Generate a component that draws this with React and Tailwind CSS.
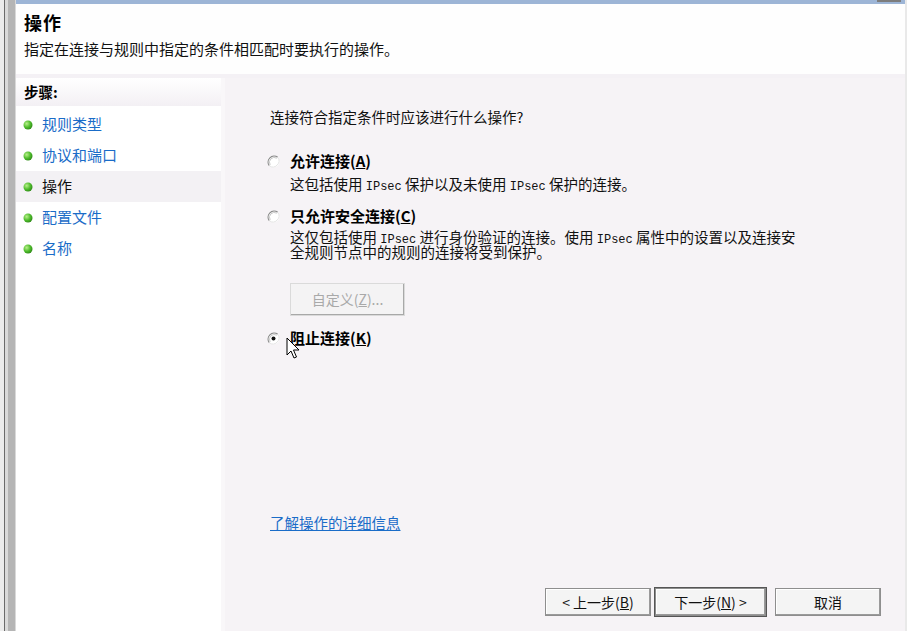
import React from 'react'

const FONT = { fontFamily: '"Noto Sans CJK SC", "Noto Sans", sans-serif' }

function Radio({ checked }) {
  return (
    <svg width="13" height="13" viewBox="0 0 13 13" className="shrink-0">
      <circle cx="6.5" cy="6.5" r="6" fill="#ffffff" />
      <path d="M2.3 10.7 A6 6 0 0 1 10.7 2.3" fill="none" stroke="#8a8a8a" strokeWidth="1.2" />
      <path d="M3.2 9.8 A4.8 4.8 0 0 1 9.8 3.2" fill="none" stroke="#c8c8c8" strokeWidth="1" />
      <path d="M10.7 2.3 A6 6 0 0 1 2.3 10.7" fill="none" stroke="#e4e4e4" strokeWidth="1" />
      {checked && <circle cx="6.5" cy="6.5" r="2" fill="#111" />}
    </svg>
  )
}

function Bullet() {
  return (
    <svg width="10" height="10" viewBox="0 0 10 10" className="shrink-0">
      <defs>
        <radialGradient id="g" cx="35%" cy="35%" r="70%">
          <stop offset="0%" stopColor="#b8f08a" />
          <stop offset="60%" stopColor="#4dbb2a" />
          <stop offset="100%" stopColor="#2f8a18" />
        </radialGradient>
      </defs>
      <circle cx="5" cy="5" r="4.5" fill="url(#g)" />
    </svg>
  )
}

const STEPS = ['规则类型', '协议和端口', '操作', '配置文件', '名称']

function Btn({ children, w, focused }) {
  return (
    <button
      className={`h-[28px] ${w} text-[14px] text-[#111] bg-[#f4f4f4] border border-[#8e8e8e] shadow-[inset_-1px_-1px_0_#9a9a9a,inset_1px_1px_0_#ffffff] flex items-center justify-center ${focused ? 'outline outline-1 outline-[#555]' : ''}`}
    >
      {children}
    </button>
  )
}

const Mono = ({ children }) => <span className="font-['Liberation_Mono'] text-[12px] leading-[10px]">{children}</span>

export default function App() {
  return (
    <div className="w-[907px] h-[631px] flex bg-[#f6f3f6] overflow-hidden relative" style={FONT}>
      {/* left frame strip */}
      <div className="w-[16px] h-full flex shrink-0">
        <div className="w-[4px] bg-[#ececec]" />
        <div className="w-[1px] bg-[#6b6b6b]" />
        <div className="w-[3px] bg-[#dadada]" />
        <div className="w-[7px] bg-[#b5b5b5]" />
        <div className="w-[1px] bg-[#d9d9d9]" />
      </div>

      <div className="flex-1 flex flex-col min-w-0">
        {/* title bar edge */}
        <div className="h-[4px] bg-[#9db5d6] flex justify-end pr-[4px] shrink-0">
          <div className="w-[24px] h-[2px] bg-[#7d7d7d]" />
        </div>

        {/* header */}
        <div className="h-[70px] bg-[#fefefe] pl-[8px] pt-[7px] shrink-0">
          <div className="text-[18px] font-bold text-black leading-[22px] tracking-[1px]">操作</div>
          <div className="text-[15px] text-[#111] leading-[20px] mt-[6px]">指定在连接与规则中指定的条件相匹配时要执行的操作。</div>
        </div>
        <div className="h-[4px] bg-[#f4f1f5] shrink-0" />

        {/* body */}
        <div className="flex-1 flex min-h-0">
          {/* steps */}
          <div className="w-[205px] bg-white flex flex-col shrink-0">
            <div className="h-[28px] bg-gradient-to-b from-white to-[#f3f0f4] flex items-center pl-[8px] text-[14.5px] font-bold text-black">
              步骤:
            </div>
            <div className="mt-[3px] flex flex-col">
              {STEPS.map((s, i) => (
                <div
                  key={s}
                  className={`h-[31px] flex items-center pl-[7px] gap-[9px] text-[15px] ${i === 2 ? 'bg-[#f3f1f4] text-[#111]' : 'text-[#1a6cc8]'}`}
                >
                  <Bullet />
                  <span>{s}</span>
                </div>
              ))}
            </div>
          </div>
          <div className="w-[4px] bg-[#f9f7f9] shrink-0" />

          {/* options */}
          <div className="flex-1 flex flex-col pl-[45px] pr-[24px] pt-[30px]">
            <div className="text-[14.5px] leading-[18px] text-[#111]">连接符合指定条件时应该进行什么操作?</div>

            <div className="mt-[25px] h-[20px] flex items-center gap-[10px] -ml-[3px]">
              <Radio />
              <span className="text-[15px] font-bold text-black">允许连接(<span className="underline">A</span>)</span>
            </div>
            <div className="mt-[4px] ml-[20px] text-[14.5px] leading-[18px] text-[#111]">
              这包括使用 <Mono>IPsec</Mono> 保护以及未使用 <Mono>IPsec</Mono> 保护的连接。
            </div>

            <div className="mt-[13px] h-[20px] flex items-center gap-[10px] -ml-[3px]">
              <Radio />
              <span className="text-[15px] font-bold text-black">只允许安全连接(<span className="underline">C</span>)</span>
            </div>
            <div className="mt-[4px] ml-[20px] h-[28px] text-[14.5px] leading-[14px] text-[#111] whitespace-nowrap">
              这仅包括使用 <Mono>IPsec</Mono> 进行身份验证的连接。使用 <Mono>IPsec</Mono> 属性中的设置以及连接安
              <br />
              全规则节点中的规则的连接将受到保护。
            </div>

            <div className="mt-[25px] ml-[20px]">
              <div className="w-[115px] h-[33px] flex items-center justify-center text-[14px] text-[#a9a9a9] bg-[#f4f3f4] border border-[#dadada] shadow-[inset_-1px_-1px_0_#a8a8a8]">
                自定义(<span className="underline">Z</span>)...
              </div>
            </div>

            <div className="mt-[12px] h-[20px] flex items-center gap-[10px] -ml-[3px]">
              <Radio checked />
              <span className="text-[15px] font-bold text-black">阻止连接(<span className="underline">K</span>)</span>
            </div>

            <div className="mt-[166px] h-[18px] text-[14.5px] leading-[18px]">
              <span className="text-[#1a6cc8] underline">了解操作的详细信息</span>
            </div>

            <div className="mt-[56px] flex justify-end">
              <Btn w="w-[106px]">&lt; 上一步(<span className="underline">B</span>)</Btn>
              <div className="w-[4px]" />
              <Btn w="w-[111px]" focused>下一步(<span className="underline">N</span>) &gt;</Btn>
              <div className="w-[9px]" />
              <Btn w="w-[106px]">取消</Btn>
            </div>
          </div>
        </div>
      </div>

      <div className="w-[2px] h-full bg-[#e9e9e9] shrink-0" />

      {/* mouse cursor */}
      <svg className="absolute left-[286px] top-[337px]" width="14" height="24" viewBox="0 0 14 24">
        <path d="M1 1 L1 18 L5 14 L8 21 L10.5 20 L7.5 13 L13 13 Z" fill="#fff" stroke="#000" strokeWidth="1" strokeLinejoin="miter" />
      </svg>
    </div>
  )
}
